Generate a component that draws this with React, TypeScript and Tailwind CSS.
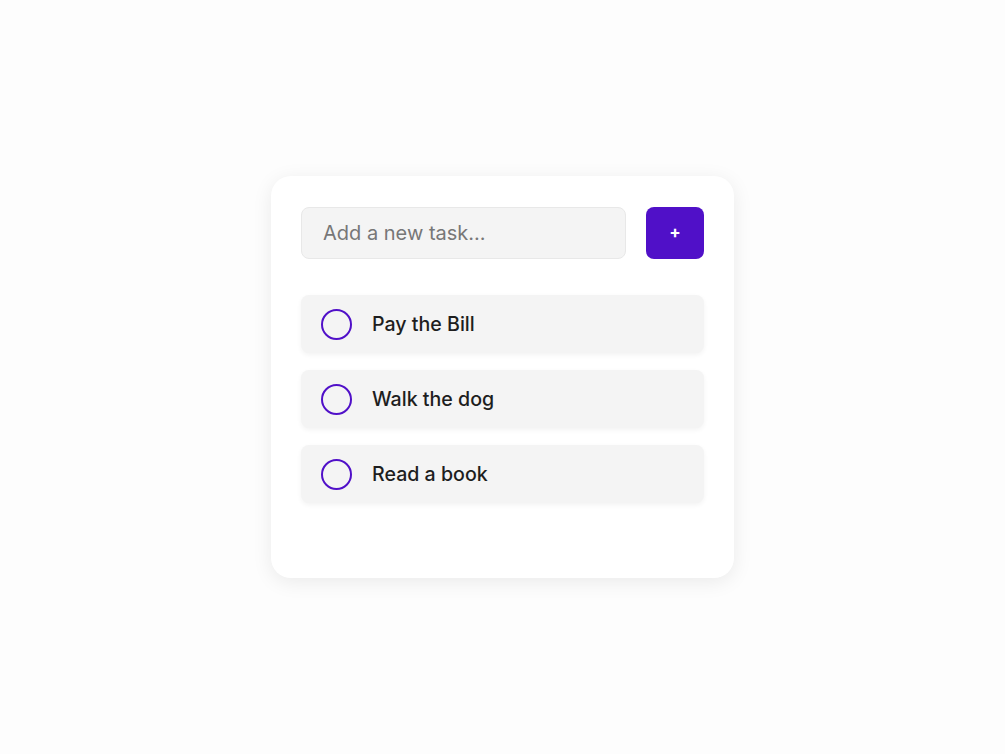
const tasks = ['Pay the Bill', 'Walk the dog', 'Read a book'];

export default function App() {
  return (
    <div
      className="min-h-screen bg-[#fdfdfd] flex items-center justify-center"
      style={{ fontFamily: 'Inter, "Liberation Sans", sans-serif' }}
    >
      <div className="w-[463px] h-[402px] bg-white rounded-[20px] shadow-[0_4px_20px_rgba(0,0,0,0.08)] px-[30px] pt-[31px]">
        <div className="flex gap-5">
          <input
            type="text"
            placeholder="Add a new task..."
            className="w-[325px] h-[52px] bg-[#f4f4f4] border border-[#e8e8e8] rounded-lg px-[21px] text-[20px] text-[#222] placeholder:text-[#777] outline-none"
          />
          <button className="w-[58px] h-[52px] bg-[#5010c8] rounded-lg text-white text-[17px] font-bold flex items-center justify-center">
            +
          </button>
        </div>
        <ul className="mt-9 flex flex-col gap-[17px]">
          {tasks.map((t) => (
            <li
              key={t}
              className="h-[58px] bg-[#f4f4f4] rounded-lg shadow-[0_2px_5px_rgba(0,0,0,0.05)] flex items-center pl-5 pr-5 pt-[1px] gap-5"
            >
              <span className="w-[31px] h-[31px] rounded-full border-2 border-[#5010c8] shrink-0" />
              <span className="text-[19.6px] text-[#1e1e1e] font-medium">{t}</span>
            </li>
          ))}
        </ul>
      </div>
    </div>
  );
}
